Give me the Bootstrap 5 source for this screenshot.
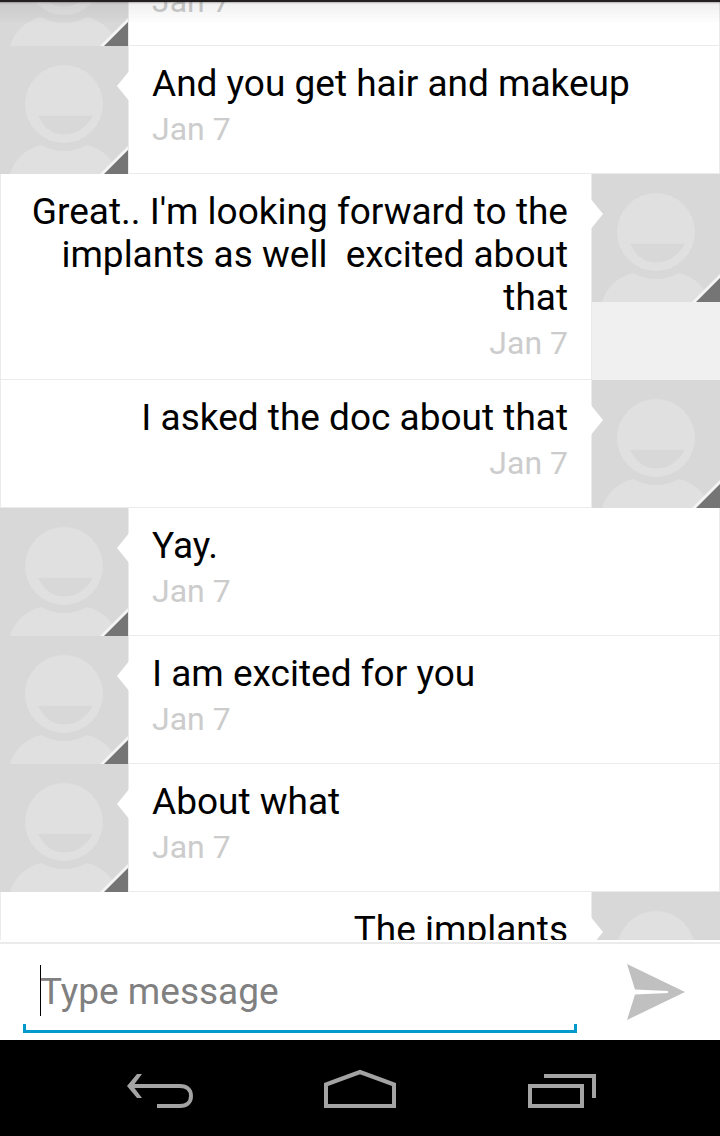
<!DOCTYPE html>
<html lang="en">
<head>
<meta charset="utf-8">
<meta name="viewport" content="width=device-width, initial-scale=1">
<title>Messages</title>
<link href="https://cdn.jsdelivr.net/npm/bootstrap@5.3.0/dist/css/bootstrap.min.css" rel="stylesheet">
<style>
  body { font-family: Roboto, "Liberation Sans", sans-serif; color: #000; border-top: 2px solid #231f20; }
  .thread { min-height: 0; overflow-y: auto; scrollbar-width: none; }
  .thread::-webkit-scrollbar { display: none; }
  .thread-wrap { min-height: 0; margin-bottom: 2px; }
  .thread-shade { height: 22px; background: linear-gradient(rgba(0,0,0,.3), rgba(0,0,0,.06) 2px, rgba(0,0,0,0)); pointer-events: none; }
  .msg { background: #f0f0f0; min-height: 128px; }
  .avatar { width: 128px; height: 128px; }
  .bubble { min-width: 0; background: #fff; border: 1px solid #ebebeb; border-top: 0; padding: 16px 23px 17px; }
  .bubble::before { content: ""; position: absolute; top: 24px; left: -12px; width: 13px; height: 32px; background: #fff; clip-path: polygon(100% 0, 100% 100%, 0 50%); }
  .sent .bubble::before { left: auto; right: -12px; clip-path: polygon(0 0, 100% 50%, 0 100%); }
  .msg-text { font-size: 37px; line-height: 43px; white-space: pre-wrap; }
  .msg-date { font-size: 32px; line-height: 38px; margin-top: 5px; color: #ccc; }
  .composer { border-top: 2px solid #ebebeb; padding-left: 23px; height: 98px; gap: 15px; }
  .field { margin-bottom: 7px; }
  .field::after { content: ""; position: absolute; left: 0; right: 0; bottom: 0; height: 9px; border: 3px solid #0099cc; border-top: 0; pointer-events: none; }
  .field input { font-size: 37px; line-height: 43px; padding: 26px 17px 20px; color: #000; }
  .field input::placeholder { color: #808080; }
  .field input:focus { box-shadow: none; }
  .caret { left: 17px; top: 21px; width: 1px; height: 51px; background: #000; pointer-events: none; }
  .send { width: 128px; }
  .sysbar { height: 96px; background: #000; padding: 0 60px; }
  .sysbar svg { fill: none; stroke: #a3a3a3; stroke-width: 4; }
</style>
</head>
<body class="d-flex flex-column vh-100 overflow-hidden bg-white">
<svg class="d-none" aria-hidden="true">
  <symbol id="person" viewBox="0 0 128 128">
    <rect width="128" height="128" fill="#d8d8d8"/>
    <circle cx="64" cy="58" r="39" fill="#e0e0e0"/>
    <path d="M38 69.700H93Q82 88.500 64 88.500Q47 88.500 38 69.700Z" fill="#d8d8d8"/>
    <path d="M10 128C14 114 25 103 41 99Q64 111 87 99C103 103 114 114 118 128Z" fill="#e0e0e0"/>
    <path d="M100 128L128 100V128Z" fill="#f5f5f5"/>
    <path d="M104 128L128 104V128Z" fill="#757575"/>
  </symbol>
</svg>

<main class="thread-wrap position-relative flex-grow-1 d-flex flex-column">
  <div class="thread flex-grow-1" id="thread">
    <article class="msg d-flex"><svg class="avatar flex-shrink-0"><use href="#person"/></svg><div class="bubble position-relative flex-grow-1"><div class="msg-text">&nbsp;</div><div class="msg-date">Jan 7</div></div></article>
    <article class="msg d-flex"><svg class="avatar flex-shrink-0"><use href="#person"/></svg><div class="bubble position-relative flex-grow-1"><div class="msg-text">And you get hair and makeup</div><div class="msg-date">Jan 7</div></div></article>
    <article class="msg sent d-flex flex-row-reverse text-end"><svg class="avatar flex-shrink-0"><use href="#person"/></svg><div class="bubble position-relative flex-grow-1"><div class="msg-text">Great.. I'm looking forward to the implants as well  excited about that</div><div class="msg-date">Jan 7</div></div></article>
    <article class="msg sent d-flex flex-row-reverse text-end"><svg class="avatar flex-shrink-0"><use href="#person"/></svg><div class="bubble position-relative flex-grow-1"><div class="msg-text">I asked the doc about that</div><div class="msg-date">Jan 7</div></div></article>
    <article class="msg d-flex"><svg class="avatar flex-shrink-0"><use href="#person"/></svg><div class="bubble position-relative flex-grow-1"><div class="msg-text">Yay.</div><div class="msg-date">Jan 7</div></div></article>
    <article class="msg d-flex"><svg class="avatar flex-shrink-0"><use href="#person"/></svg><div class="bubble position-relative flex-grow-1"><div class="msg-text">I am excited for you</div><div class="msg-date">Jan 7</div></div></article>
    <article class="msg d-flex"><svg class="avatar flex-shrink-0"><use href="#person"/></svg><div class="bubble position-relative flex-grow-1"><div class="msg-text">About what</div><div class="msg-date">Jan 7</div></div></article>
    <article class="msg sent d-flex flex-row-reverse text-end"><svg class="avatar flex-shrink-0"><use href="#person"/></svg><div class="bubble position-relative flex-grow-1"><div class="msg-text">The implants</div></div></article>
  </div>
  <div class="thread-shade position-absolute top-0 start-0 w-100"></div>
</main>

<form class="composer d-flex flex-shrink-0">
  <div class="field position-relative flex-grow-1 d-flex">
    <input class="form-control border-0 rounded-0 bg-transparent" type="text" placeholder="Type message" aria-label="Type message">
    <span class="caret position-absolute"></span>
  </div>
  <button class="send btn border-0 rounded-0 p-0 flex-shrink-0" type="button" aria-label="Send">
    <svg width="58" height="56" viewBox="0 0 58 56"><path d="M0 0L58 28L0 56L8 30.500L41 29V27L8 25.500Z" fill="#c0c0c0"/></svg>
  </button>
</form>

<nav class="sysbar d-flex flex-shrink-0" aria-label="System">
  <button class="btn border-0 p-0 flex-fill" type="button" aria-label="Back"><svg width="72" height="48" viewBox="0 0 72 48"><path d="M7 22H56C63 22 67 26 67 32S63 42 56 42H33"/><path d="M13 10H18L9 22L18 34H13L3 22Z" fill="#a3a3a3" stroke="none"/></svg></button>
  <button class="btn border-0 p-0 flex-fill" type="button" aria-label="Home"><svg width="72" height="48" viewBox="0 0 72 48"><path d="M2 42V20.500L36 8L70 20.500V42Z"/></svg></button>
  <button class="btn border-0 p-0 flex-fill" type="button" aria-label="Recent apps"><svg width="72" height="48" viewBox="0 0 72 48"><path d="M6 22H58V42H6ZM20 12H70V34"/></svg></button>
</nav>

<script src="https://cdn.jsdelivr.net/npm/bootstrap@5.3.0/dist/js/bootstrap.bundle.min.js"></script>
<script>
  // Open the conversation scrolled part of the way down.
  document.getElementById('thread').scrollTop = 84;
</script>
</body>
</html>
